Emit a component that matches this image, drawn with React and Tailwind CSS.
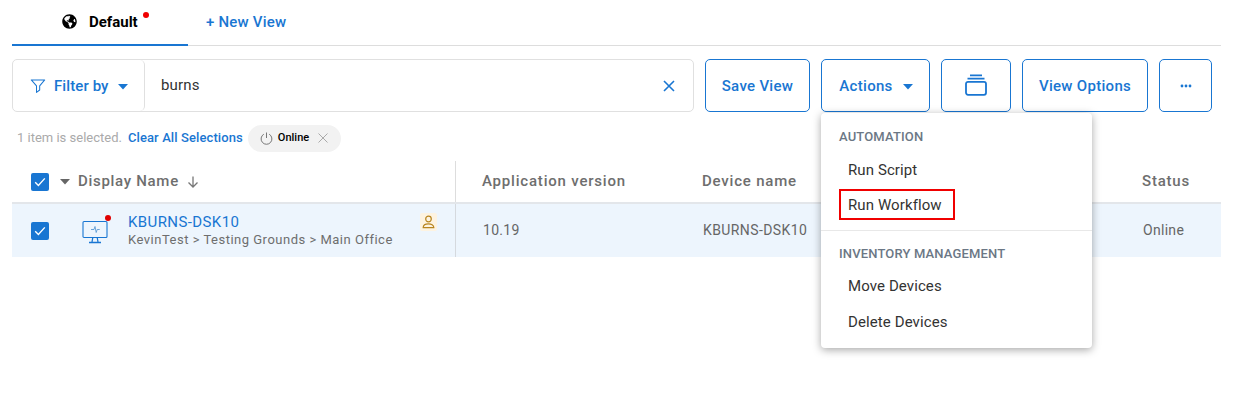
import React from "react";
import { FaGlobeAmericas } from "react-icons/fa";

const BLUE = "#1976d2";

const Caret = ({ className = "" }) => (
  <svg width="10" height="6" viewBox="0 0 10 6" className={className}>
    <path d="M0 0h10L5 5.5z" fill="currentColor" />
  </svg>
);

const Check = () => (
  <span className="w-[18px] h-[18px] rounded-[2px] bg-[#1976d2] flex items-center justify-center shrink-0">
    <svg width="12" height="10" viewBox="0 0 12 10" fill="none">
      <path d="M1.2 5.2 4.4 8.4 10.8 1.4" stroke="#fff" strokeWidth="1.4" />
    </svg>
  </span>
);

const Button = ({ className, children }) => (
  <button className={`${className} h-[53px] shrink-0 rounded-[5px] border border-[#1976d2] bg-white text-[#1976d2] text-[15px] font-medium tracking-[0.3px] flex items-center justify-center`}>
    {children}
  </button>
);

const MenuHeading = ({ children, className = "" }) => (
  <div className={`pl-[18px] text-[13px] font-medium tracking-[0.15px] text-[#6b7785] ${className}`}>{children}</div>
);

const MenuItem = ({ children, className = "" }) => (
  <div className={`pl-[27px] text-[15px] tracking-[0.1px] text-[#333] ${className}`}>{children}</div>
);

export default function App() {
  return (
    <div className="relative w-[1233px] h-[413px] bg-white overflow-hidden font-['Roboto',sans-serif]">
      {/* tabs */}
      <div className="flex ml-3 mr-3 h-[46px] border-b border-[#dddddd]">
        <div className="w-[176px] h-[46px] border-b-2 border-[#1976d2] flex items-center pl-[50px]">
          <FaGlobeAmericas size={15} className="text-black mb-[2px]" />
          <span className="ml-[12px] text-[15px] font-bold text-black">Default</span>
          <span className="w-[6px] h-[6px] rounded-full bg-[#f00000] ml-[5px] mb-[15px]" />
        </div>
        <div className="ml-[18px] flex items-center text-[15px] font-medium text-[#1976d2] tracking-[0.2px]">+ New View</div>
      </div>

      {/* toolbar */}
      <div className="flex ml-3 mt-[13px]">
        <div className="w-[682px] h-[53px] border border-[#e0e0e0] rounded-[5px] flex items-center">
          <div className="w-[132px] h-full border-r border-[#e0e0e0] rounded-[5px] flex items-center pl-[17px] pt-[2px] text-[#1976d2]">
            <svg width="16" height="14" viewBox="0 0 16 15" fill="none" stroke={BLUE} strokeWidth="1.1" className="mb-[2px]">
              <path d="M.8 1h14.4L9.8 7.4v4.4l-3.4 2.6v-7z" strokeLinejoin="round" />
            </svg>
            <span className="ml-[8px] text-[15px] font-medium tracking-[0.1px]">Filter by</span>
            <Caret className="ml-[9px]" />
          </div>
          <span className="ml-4 flex-1 text-[15px] text-[#333] tracking-[0.2px]">burns</span>
          <svg width="12" height="12" viewBox="0 0 12 12" className="mr-[18px]" stroke={BLUE} strokeWidth="1.6">
            <path d="M1 1l10 10M11 1 1 11" />
          </svg>
        </div>
        <div className="ml-[11px] flex gap-[11px]">
          <Button className="w-[105px] pt-[2px]">Save View</Button>
          <Button className="w-[109px] pt-[2px] pl-[1px]">
            Actions
            <Caret className="ml-[10px]" />
          </Button>
          <Button className="w-[70px]">
            <svg width="22" height="22" viewBox="0 0 22 22" fill="none" stroke={BLUE} strokeWidth="1.8" className="mb-[2px]">
              <rect x="1" y="7.8" width="20" height="13" rx="2" />
              <path d="M2.5 4.6h17M5 1.4h12" />
            </svg>
          </Button>
          <Button className="w-[126px] pt-[2px]">View Options</Button>
          <Button className="w-[53px]">
            <svg width="12" height="4" viewBox="0 0 12 4" fill={BLUE}>
              <circle cx="2" cy="2" r="1.4" />
              <circle cx="6" cy="2" r="1.4" />
              <circle cx="10" cy="2" r="1.4" />
            </svg>
          </Button>
        </div>
      </div>

      {/* selection line */}
      <div className="flex items-center ml-[17px] mt-[12px] h-[28px]">
        <span className="text-[13px] text-[#aaaaaa] pb-[1px]">1 item is selected.</span>
        <span className="ml-[6px] text-[13px] font-medium text-[#1976d2] tracking-[0.1px] pb-[1px]">Clear All Selections</span>
        <div className="ml-[5px] w-[93px] h-[27px] rounded-full bg-[#f2f2f2] flex items-center pl-[12px]">
          <svg width="13" height="13" viewBox="0 0 13 13" fill="none" stroke="#777" strokeWidth="1">
            <path d="M6.5.5v5.5M3.8 2.2a5.4 5.4 0 1 0 5.4 0" />
          </svg>
          <span className="ml-[5px] text-[11px] font-medium text-black">Online</span>
          <svg width="10" height="10" viewBox="0 0 10 10" className="ml-[9px]" stroke="#aaa" strokeWidth="1">
            <path d="M.5.5l9 9M9.5.5l-9 9" />
          </svg>
        </div>
      </div>

      {/* table header */}
      <div className="flex ml-3 mr-3 mt-[9px] h-[43px] items-center border-b-2 border-[#e3e6ea] text-[15px] font-medium text-[#6e6e6e] tracking-[0.8px]">
        <div className="w-[444px] h-full flex items-center pl-[19px] border-r border-[#dddddd] tracking-[0.7px]">
          <Check />
          <Caret className="ml-[11px] text-[#666]" />
          <span className="ml-[8px]">Display Name</span>
          <svg width="12" height="12" viewBox="0 0 12 12" fill="none" stroke="#777" strokeWidth="1.3" className="ml-[8px]">
            <path d="M6 .5v10.5M1.5 6.5 6 11l4.5-4.5" />
          </svg>
        </div>
        <div className="ml-[26px] w-[220px]">Application version</div>
        <div className="flex-1">Device name</div>
        <div className="w-[79px]">Status</div>
      </div>

      {/* table row */}
      <div className="flex ml-3 mr-3 h-[53px] items-center bg-[#edf5fd] text-[14px] text-[#666] tracking-[0.4px]">
        <div className="relative w-[444px] h-full flex items-center pl-[19px] border-r border-[#d5d9de]">
          <Check />
          <div className="relative ml-[33px] w-[26px] h-[26px]">
            <svg width="26" height="26" viewBox="0 0 26 26" fill="none" stroke={BLUE} strokeWidth="1.1" className="mt-[1px]">
              <rect x="1" y="2.5" width="24" height="16" rx="1" />
              <path d="M9 10.5h3l1-3 1.2 6 1-3h2.5" stroke="#5b9bd5" strokeWidth="0.9" />
              <path d="M10.8 18.5 10 23M15.2 18.5l.8 4.5M7 23.5h12" strokeWidth="1.3" />
            </svg>
            <span className="absolute -top-[3px] -right-[3px] w-[6px] h-[6px] rounded-full bg-[#e00000]" />
          </div>
          <div className="ml-[20px] flex flex-col">
            <span className="text-[#1976d2] text-[15px] leading-[18px] tracking-[0.4px] -mt-[1px]">KBURNS-DSK10</span>
            <span className="text-[13px] leading-[16px] mt-[1px] text-[#6e6e6e] tracking-[0.5px]">KevinTest &gt; Testing Grounds &gt; Main Office</span>
          </div>
          <div className="absolute right-[18px] top-[9px] w-[17px] h-[18px] bg-[#fdf3e1] rounded-[2px] flex items-center justify-center">
            <svg width="13" height="14" viewBox="0 0 13 14" fill="none" stroke="#b8851f" strokeWidth="1.2">
              <circle cx="6.5" cy="4" r="2.8" />
              <path d="M1.2 12.6c0-5 10.6-5 10.6 0z" />
            </svg>
          </div>
        </div>
        <div className="ml-[27px] w-[220px] tracking-[0.3px]">10.19</div>
        <div className="flex-1">KBURNS-DSK10</div>
        <div className="w-[78px] tracking-[0.3px]">Online</div>
      </div>

      {/* actions menu */}
      <div className="absolute left-[821px] top-[113px] w-[271px] h-[235px] bg-white rounded-[4px] shadow-[0_2px_8px_rgba(0,0,0,0.35)] flex flex-col">
        <MenuHeading className="mt-[17px] leading-[14px]">AUTOMATION</MenuHeading>
        <MenuItem className="mt-[16px] leading-[20px]">Run Script</MenuItem>
        <div className="ml-[18px] mt-[9px] w-[116px] h-[31px] border-2 border-[#f00000] flex items-center pl-[7px] pt-[2px] text-[15px] tracking-[0.1px] text-[#333]">Run Workflow</div>
        <div className="mt-[10px] border-t border-[#e8e8e8]" />
        <MenuHeading className="mt-[16px] leading-[14px]">INVENTORY MANAGEMENT</MenuHeading>
        <MenuItem className="mt-[15px] leading-[20px]">Move Devices</MenuItem>
        <MenuItem className="mt-[16px] leading-[20px]">Delete Devices</MenuItem>
      </div>
    </div>
  );
}
